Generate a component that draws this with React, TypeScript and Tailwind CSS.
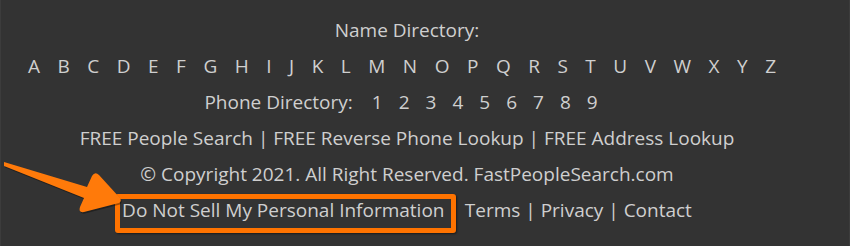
const letters = 'ABCDEFGHIJKLMNOPQRSTUVWXYZ'.split('')
const digits = ['1', '2', '3', '4', '5', '6', '7', '8', '9']

function Arrow() {
  return (
    <svg
      className="pointer-events-none absolute left-0 top-0"
      width="130"
      height="246"
      viewBox="0 0 130 246"
    >
      <path
        d="M3 162 L86 187 L91 176 Q94 171 98 175 L119 198 Q121 201 118 203 L83 212 Q77 213 79 207 L83 198 L3 166 Z"
        fill="#000"
        opacity="0.35"
        transform="translate(1 1.5)"
      />
      <path
        d="M3 162 L86 187 L91 176 Q94 171 98 175 L119 198 Q121 201 118 203 L83 212 Q77 213 79 207 L83 198 L3 166 Z"
        fill="#ff7a0a"
      />
    </svg>
  )
}

export default function App() {
  return (
    <div
      className="relative h-[246px] w-[850px] overflow-hidden border-x border-[#3c3c3c] bg-[#333333] text-[19px] leading-[36px] text-[#cfcfcf]"
      style={{ fontFamily: '"Open Sans", "Noto Sans", sans-serif' }}
    >
      <div className="flex w-[812px] flex-col items-center pt-[12px]">
        {/* name directory */}
        <div>Name Directory:</div>
        <div className="flex gap-[17.5px] pr-[10px]">
          {letters.map((l) => (
            <a key={l}>{l}</a>
          ))}
        </div>

        {/* phone directory */}
        <div className="flex gap-[16px] pr-[12px]">
          <span className="mr-[3px]">Phone Directory:</span>
          {digits.map((d) => (
            <a key={d}>{d}</a>
          ))}
        </div>

        <div>FREE People Search | FREE Reverse Phone Lookup | FREE Address Lookup</div>
        <div>© Copyright 2021. All Right Reserved. FastPeopleSearch.com</div>

        <div className="whitespace-pre">
          <span className="relative inline-block">
            Do Not Sell My Personal Information
            <span className="absolute -left-[7px] -right-[11px] top-[2px] bottom-[-5px] rounded-[3px] border-[5px] border-[#ff7300] shadow-[1px_1px_2px_rgba(0,0,0,0.5)]" />
          </span>
          {' | Terms | Privacy | Contact'}
        </div>
      </div>
      <Arrow />
    </div>
  )
}
